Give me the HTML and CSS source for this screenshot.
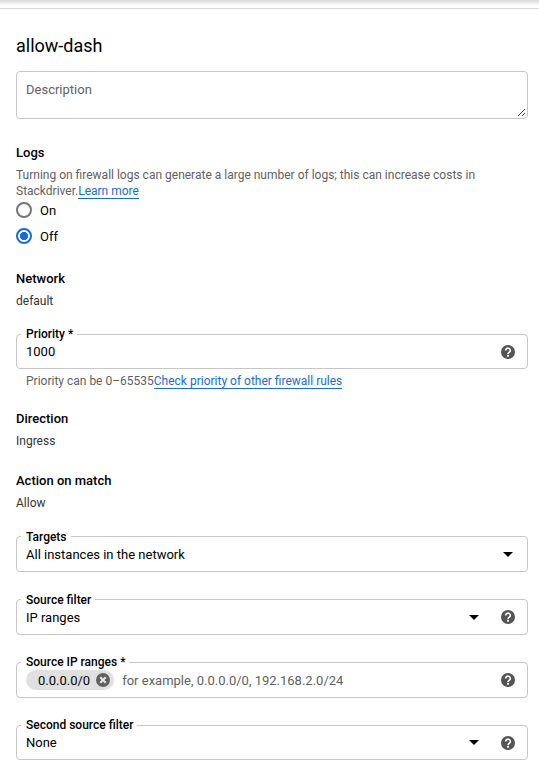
FILE: index.html
```
<!DOCTYPE html>
<html lang="en">
<head>
<meta charset="utf-8">
<title>allow-dash</title>
<link rel="stylesheet" href="styles.css">
</head>
<body>
<svg class="defs" width="0" height="0">
  <symbol id="help" viewBox="0 0 14 14"><circle cx="7" cy="7" r="7"/><path d="M4.700 5.400a2.300 2.200 0 1 1 3.700 1.700C7.500 7.700 7 8 7 9.200" fill="none" stroke="#fff" stroke-width="1.600"/><path d="M6.100 10h1.800v1.800H6.100z" fill="#fff"/></symbol>
  <symbol id="arrow" viewBox="0 0 10 5"><path d="M0 0h10L5 5z"/></symbol>
</svg>
<div class="topbar"></div>
<main class="panel">
  <h1 class="title">allow-dash</h1>
  <div class="description"><span>Description</span>
    <svg class="grip" width="8" height="8" viewBox="0 0 8 8" shape-rendering="crispEdges"><path d="M0 7h1v1H0zM1 6h1v1H1zM2 5h1v1H2zM3 4h1v1H3zM4 3h1v1H4zM5 2h1v1H5zM6 1h1v1H6zM4 7h1v1H4zM5 6h1v1H5zM6 5h1v1H6z"/></svg>
  </div>

  <section class="logs">
    <h2 class="heading">Logs</h2>
    <p class="hint">Turning on firewall logs can generate a large number of logs; this can increase costs in Stackdriver.<a class="link">Learn more</a></p>
    <div class="option"><span class="radio"></span><span class="name">On</span></div>
    <div class="option"><span class="radio checked"></span><span class="name">Off</span></div>
  </section>

  <section class="network">
    <h2 class="heading">Network</h2>
    <p class="value">default</p>
  </section>

  <div class="field short priority">
    <span class="label">Priority *</span>
    <span class="text">1000</span>
    <svg class="help"><use href="#help"/></svg>
  </div>
  <p class="hint below">Priority can be 0–65535<a class="link">Check priority of other firewall rules</a></p>

  <section class="direction">
    <h2 class="heading">Direction</h2>
    <p class="value">Ingress</p>
  </section>
  <section class="action">
    <h2 class="heading">Action on match</h2>
    <p class="value">Allow</p>
  </section>

  <div class="field select targets">
    <span class="label">Targets</span>
    <span class="text">All instances in the network</span>
    <svg class="arrow last"><use href="#arrow"/></svg>
  </div>
  <div class="field select">
    <span class="label">Source filter</span>
    <span class="text">IP ranges</span>
    <svg class="arrow"><use href="#arrow"/></svg>
    <svg class="help"><use href="#help"/></svg>
  </div>
  <div class="field">
    <span class="label">Source IP ranges *</span>
    <span class="chip"><span class="chip-text">0.0.0.0/0</span><svg class="remove" viewBox="0 0 14 14"><circle cx="7" cy="7" r="7"/><path d="M4.300 4.300l5.400 5.400M9.700 4.300l-5.400 5.400"/></svg></span>
    <span class="text placeholder">for example, 0.0.0.0/0, 192.168.2.0/24</span>
    <svg class="help"><use href="#help"/></svg>
  </div>
  <div class="field short">
    <span class="label">Second source filter</span>
    <span class="text">None</span>
    <svg class="arrow"><use href="#arrow"/></svg>
    <svg class="help"><use href="#help"/></svg>
  </div>
</main>
</body>
</html>
```
FILE: styles.css
```
* { box-sizing: border-box; }
body {
  margin: 0;
  background: #fff;
  color: #000;
  font: 13px/20px Roboto, sans-serif;
}
h1, h2, p { margin: 0; }
.defs { display: block; }
.topbar {
  height: 9px;
  background: linear-gradient(#dcdcdc, #e6e6e6 2px, #f6f6f6 4px, #fff 6px);
  border-bottom: 1px solid #dadada;
}
.panel { padding: 25px 11px 0 16px; }
.title { font-size: 18px; line-height: 24px; font-weight: 400; }
.description {
  position: relative;
  height: 48px;
  margin-top: 13px;
  padding: 8px 9px;
  border: 1px solid #c6c6c6;
  border-radius: 4px;
  color: #616161;
}
.grip { position: absolute; right: 1px; bottom: 2px; fill: #444; }
.heading { font-size: 13px; line-height: 20px; font-weight: 500; }
.logs { margin-top: 24px; }
.hint { font-size: 12px; line-height: 16px; color: #616161; }
.logs .hint { margin-top: 4px; }
.link { color: #196bd6; border-bottom: 1px solid #196bd6; }
.option { display: flex; align-items: center; gap: 8px; height: 16px; margin-bottom: 10px; }
.logs .hint + .option { margin-top: 3px; }
.name { padding-top: 2px; }
.radio { width: 16px; height: 16px; border: 2px solid #757575; border-radius: 50%; }
.radio.checked {
  border-color: #196bd6;
  background: radial-gradient(circle, #196bd6 3.800px, #fff 4.400px);
}
.network { margin-top: 25px; }
.value { font-size: 12px; line-height: 20px; margin-top: 2px; color: #333; }
.field {
  position: relative;
  display: flex;
  align-items: center;
  height: 36px;
  margin-bottom: 27px;
  padding: 0 12px 0 9px;
  border: 1px solid #c6c6c6;
  border-radius: 4px;
}
.label {
  position: absolute;
  left: 4px;
  top: -9px;
  padding: 0 4px 0 5px;
  background: #fff;
  font-size: 12px;
  line-height: 16px;
  font-weight: 500;
}
.select .label { top: -8px; }
.text { flex: 1; }
.select .text, .placeholder { padding-top: 2px; }
.help { width: 14px; height: 14px; fill: #545454; }
.short .help { margin-top: 1px; }
.arrow { width: 10px; height: 5px; margin-right: 22px; }
.select .arrow { margin-top: 1px; }
.short .arrow { margin-bottom: 1px; }
.arrow.last { margin-right: 2px; }
.short { height: 35px; }
.priority { margin: 23px 0 4px; }
.below { padding-left: 10px; }
.direction { margin-top: 20px; }
.action { margin-top: 20px; }
.targets { margin-top: 23px; }
.chip {
  display: flex;
  align-items: center;
  height: 20px;
  margin-right: 8px;
  padding: 0 4px 0 12px;
  border-radius: 10px;
  background: #e0e0e0;
}
.chip-text { padding-top: 2px; }
.remove { width: 14px; height: 14px; margin-left: 6px; fill: #616161; stroke: #e8e8e8; stroke-width: 2; }
.remove circle { stroke: none; }
.placeholder { color: #616161; }
```
